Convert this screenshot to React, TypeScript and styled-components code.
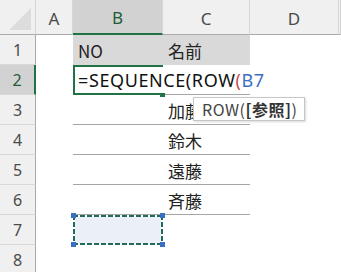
import React from 'react';
import styled, { createGlobalStyle } from 'styled-components';

const GlobalStyle = createGlobalStyle`
  html, body {
    margin: 0;
    padding: 0;
    background: #ffffff;
    overflow: hidden;
  }
  body {
    font-family: "Noto Sans CJK JP", "Noto Sans", sans-serif;
  }
`;

const columns = ['A', 'B', 'C', 'D'];

const names = ['加藤', '鈴木', '遠藤', '斉藤'];

const App = () => {
  return (
    <>
      <GlobalStyle />
      <Sheet>
        <Corner />
        {columns.map((c) => (
          <ColHeader key={c} $selected={c === 'B'}>
            {c}
          </ColHeader>
        ))}
        <ColHeader />

        {/* row 1 */}
        <RowHeader>1</RowHeader>
        <Cell />
        <Cell $fill>NO</Cell>
        <Cell $fill>名前</Cell>
        <Cell />
        <Cell />

        {/* row 2 */}
        <RowHeader $selected>2</RowHeader>
        <Cell />
        <ActiveCell>
          <Formula>
            =SEQUENCE(ROW<Paren>(</Paren>
            <Ref>B7</Ref>
          </Formula>
          <FillHandle />
        </ActiveCell>
        <Cell $underline />
        <Cell />
        <Cell />

        {names.map((name, i) => (
          <React.Fragment key={name}>
            <RowHeader>{i + 3}</RowHeader>
            <Cell />
            <Cell $underline />
            <Cell $underline>
              {name}
              {i === 0 && (
                <Tooltip>
                  ROW(<b>[参照]</b>)
                </Tooltip>
              )}
            </Cell>
            <Cell />
            <Cell />
          </React.Fragment>
        ))}

        {/* row 7 */}
        <RowHeader>7</RowHeader>
        <Cell />
        <MarqueeCell>
          <Marquee>
            <Handle $top $left />
            <Handle $top />
            <Handle $left />
            <Handle />
          </Marquee>
        </MarqueeCell>
        <Cell />
        <Cell />
        <Cell />

        {/* row 8 */}
        <RowHeader>8</RowHeader>
        <Cell />
        <Cell />
        <Cell />
        <Cell />
        <Cell />
      </Sheet>
    </>
  );
};

const Sheet = styled.div`
  display: grid;
  grid-template-columns: 36px 37px 90px 87px 89px 2px;
  grid-template-rows: 35px repeat(7, 30px) 30px;
  width: 341px;
  height: 272px;
  overflow: hidden;
  color: #000;
`;

const Corner = styled.div`
  position: relative;
  background: #f0f0f0;
  border-right: 1px solid #d6d6d6;
  border-bottom: 1px solid #a9a9a9;
  box-sizing: border-box;

  &::after {
    content: '';
    position: absolute;
    right: 4px;
    bottom: 4px;
    width: 0;
    height: 0;
    border-left: 22px solid transparent;
    border-bottom: 22px solid #dcdcdc;
  }
`;

const ColHeader = styled.div<{ $selected?: boolean }>`
  display: flex;
  align-items: center;
  justify-content: center;
  box-sizing: border-box;
  background: ${(p) => (p.$selected ? '#d2d2d2' : '#f0f0f0')};
  border-right: 1px solid #d6d6d6;
  border-bottom: ${(p) => (p.$selected ? '2px solid #217346' : '1px solid #a9a9a9')};
  color: ${(p) => (p.$selected ? '#1e5c3a' : '#4a4a4a')};
  font-family: "Noto Sans", sans-serif;
  font-size: 17px;
  padding-top: 2px;
`;

const RowHeader = styled.div<{ $selected?: boolean }>`
  display: flex;
  align-items: center;
  justify-content: center;
  box-sizing: border-box;
  background: ${(p) => (p.$selected ? '#d2d2d2' : '#f0f0f0')};
  border-right: ${(p) => (p.$selected ? '2px solid #217346' : '1px solid #a9a9a9')};
  border-bottom: 1px solid #d9d9d9;
  color: ${(p) => (p.$selected ? '#1e5c3a' : '#4a4a4a')};
  font-family: "Noto Sans", sans-serif;
  font-size: 16px;
`;

const Cell = styled.div<{ $fill?: boolean; $underline?: boolean }>`
  position: relative;
  display: flex;
  align-items: center;
  box-sizing: border-box;
  padding: 1px 0 0 5px;
  font-size: 17px;
  color: #222;
  white-space: nowrap;
  background: ${(p) => (p.$fill ? '#d9d9d9' : 'transparent')};
  border-bottom: ${(p) => (p.$underline ? '1px solid #a6a6a6' : 'none')};
`;

const ActiveCell = styled.div`
  position: relative;
  z-index: 2;
  display: flex;
  align-items: center;
  box-sizing: border-box;
  border-top: 2px solid #217346;
  border-left: 2px solid #217346;
  border-bottom: 2px solid #217346;
  padding-left: 3px;
  white-space: nowrap;
  overflow: visible;
`;

const Formula = styled.span`
  font-family: "Noto Sans", sans-serif;
  font-size: 18px;
  color: #111;
  letter-spacing: 0.6px;
`;

const Paren = styled.span`
  color: #c0504d;
`;

const Ref = styled.span`
  color: #3c6fc4;
`;

const FillHandle = styled.div`
  position: absolute;
  right: -2px;
  bottom: -4px;
  width: 5px;
  height: 4px;
  background: #217346;
`;

const Tooltip = styled.div`
  position: absolute;
  z-index: 3;
  left: 30px;
  top: 2px;
  width: 112px;
  height: 24px;
  box-sizing: border-box;
  display: flex;
  align-items: center;
  padding-left: 8px;
  background: #ffffff;
  border: 1px solid #c6c6c6;
  box-shadow: 1px 1px 2px rgba(0, 0, 0, 0.15);
  font-size: 16px;
  letter-spacing: 0.5px;
  color: #444;

  b {
    font-weight: 700;
    color: #333;
  }
`;

const MarqueeCell = styled.div`
  position: relative;
`;

const dashH = 'repeating-linear-gradient(90deg, #1f6b5a 0 5px, #ffffff 5px 7px)';
const dashV = 'repeating-linear-gradient(180deg, #1f6b5a 0 5px, #ffffff 5px 7px)';

const Marquee = styled.div`
  position: absolute;
  inset: 0;
  background:
    ${dashH} top left / 100% 2px no-repeat,
    ${dashH} bottom left / 100% 2px no-repeat,
    ${dashV} top left / 2px 100% no-repeat,
    ${dashV} top right / 2px 100% no-repeat,
    #eaeff8;
`;

const Handle = styled.div<{ $top?: boolean; $left?: boolean }>`
  position: absolute;
  width: 5px;
  height: 5px;
  background: #3a6fc6;
  ${(p) => (p.$top ? 'top: -2px;' : 'bottom: -2px;')}
  ${(p) => (p.$left ? 'left: -2px;' : 'right: -2px;')}
`;

export default App;
